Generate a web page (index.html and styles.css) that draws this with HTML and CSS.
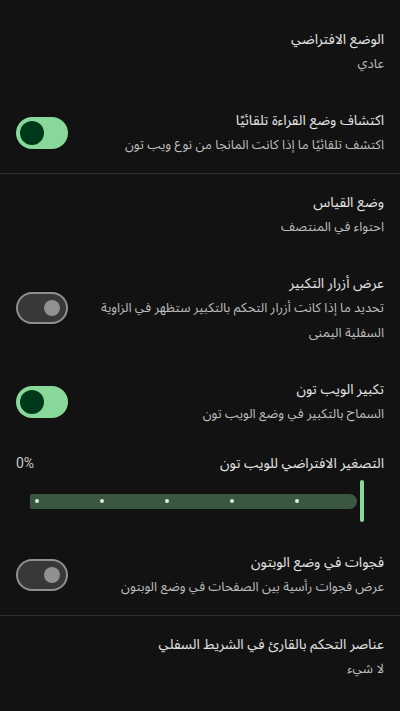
FILE: index.html
```html
<!DOCTYPE html>
<html lang="ar" dir="rtl">
<head>
<meta charset="utf-8">
<link rel="stylesheet" href="styles.css">
</head>
<body>
<div class="list">
  <div class="pref">
    <div class="text">
      <div class="title">الوضع الافتراضي</div>
      <div class="summary">عادي</div>
    </div>
  </div>
  <div class="pref">
    <div class="text">
      <div class="title">اكتشاف وضع القراءة تلقائيًا</div>
      <div class="summary">اكتشف تلقائيًا ما إذا كانت المانجا من نوع ويب تون</div>
    </div>
    <div class="switch on"><span class="thumb"></span></div>
  </div>
  <div class="divider"></div>
  <div class="pref">
    <div class="text">
      <div class="title">وضع القياس</div>
      <div class="summary">احتواء في المنتصف</div>
    </div>
  </div>
  <div class="pref">
    <div class="text">
      <div class="title">عرض أزرار التكبير</div>
      <div class="summary">تحديد ما إذا كانت أزرار التحكم بالتكبير ستظهر في الزاوية السفلية اليمنى</div>
    </div>
    <div class="switch off"><span class="thumb"></span></div>
  </div>
  <div class="pref">
    <div class="text">
      <div class="title">تكبير الويب تون</div>
      <div class="summary">السماح بالتكبير في وضع الويب تون</div>
    </div>
    <div class="switch on"><span class="thumb"></span></div>
  </div>
  <div class="pref slider-pref">
    <div class="slider-head">
      <div class="title">التصغير الافتراضي للويب تون</div>
      <div class="value">0%</div>
    </div>
    <div class="slider">
      <div class="handle"></div>
      <div class="track">
        <span class="tick"></span><span class="tick"></span><span class="tick"></span><span class="tick"></span><span class="tick"></span>
      </div>
    </div>
  </div>
  <div class="pref">
    <div class="text">
      <div class="title">فجوات في وضع الوبتون</div>
      <div class="summary">عرض فجوات رأسية بين الصفحات في وضع الوبتون</div>
    </div>
    <div class="switch off"><span class="thumb"></span></div>
  </div>
  <div class="divider"></div>
  <div class="pref">
    <div class="text">
      <div class="title">عناصر التحكم بالقارئ في الشريط السفلي</div>
      <div class="summary">لا شيء</div>
    </div>
  </div>
</div>
</body>
</html>
```

FILE: styles.css
```css
html, body {
  margin: 0;
  padding: 0;
  background: #121212;
}
body {
  font-family: "Noto Sans Arabic UI", "Noto Sans Arabic", "Noto Naskh Arabic", "DejaVu Sans", sans-serif;
  color: #e3e3e3;
  width: 400px;
  height: 711px;
  overflow: hidden;
}
.list {
  padding-top: 11px;
}
.pref {
  display: flex;
  align-items: center;
  gap: 16px;
  padding: 16px;
}
.text {
  flex: 1;
  min-width: 0;
}
.title {
  font-size: 14px;
  line-height: 24px;
  color: #e2e2e2;
}
.summary {
  font-size: 13px;
  line-height: 25px;
  color: #bdbdbd;
}
.divider {
  height: 1px;
  background: #2e2e2e;
}
.switch {
  flex: none;
  width: 52px;
  height: 32px;
  border-radius: 16px;
  box-sizing: border-box;
  display: flex;
  align-items: center;
}
.switch.on {
  background: #88d899;
  justify-content: flex-end;
  padding: 0 4px;
}
.switch.on .thumb {
  width: 24px;
  height: 24px;
  border-radius: 50%;
  background: #00391a;
}
.switch.off {
  background: #383838;
  border: 2px solid #8f8f8f;
  justify-content: flex-start;
  padding: 0 6px;
}
.switch.off .thumb {
  width: 16px;
  height: 16px;
  border-radius: 50%;
  background: #919191;
}
.slider-pref {
  display: block;
  padding: 9px 16px 12px;
}
.slider-head {
  display: flex;
  justify-content: space-between;
  align-items: center;
}
.value {
  font-family: Roboto, "Noto Sans", sans-serif;
  font-size: 14px;
  line-height: 24px;
  color: #c8c8c8;
}
.slider {
  margin-top: 5px;
  height: 42px;
  display: flex;
  align-items: center;
  padding-right: 20px;
  padding-left: 14px;
  gap: 3px;
}
.handle {
  flex: none;
  width: 4px;
  height: 42px;
  border-radius: 2px;
  background: #88d899;
}
.track {
  flex: 1;
  height: 15px;
  background: #3b5742;
  border-radius: 2px 8px 8px 2px;
  display: flex;
  align-items: center;
  justify-content: space-between;
  padding: 0 58px 0 5px;
  box-sizing: border-box;
}
.tick {
  width: 4px;
  height: 4px;
  border-radius: 50%;
  background: #d9eedc;
}
```
